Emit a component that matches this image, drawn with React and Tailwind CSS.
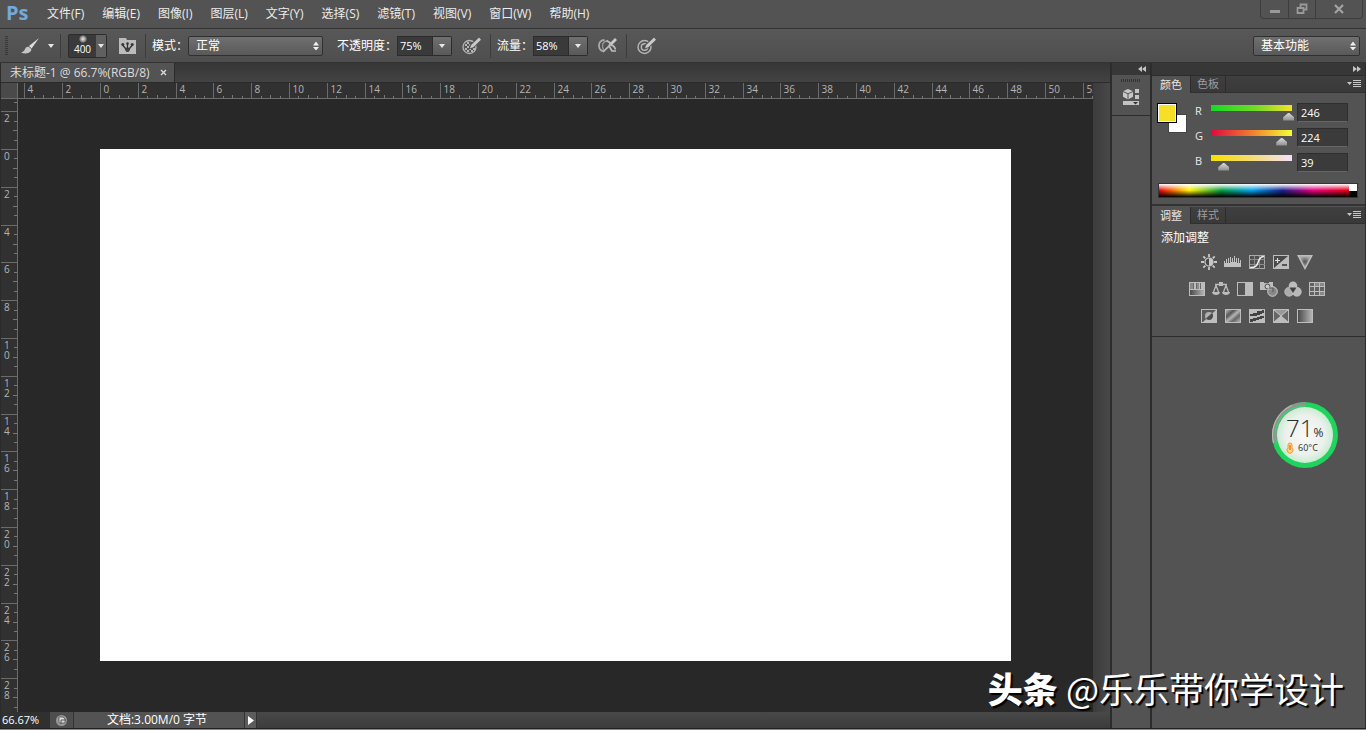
import React, { useState } from "react";

const MENUS = ["文件(F)", "编辑(E)", "图像(I)", "图层(L)", "文字(Y)", "选择(S)", "滤镜(T)", "视图(V)", "窗口(W)", "帮助(H)"];

// pixels per two centimetres at 66.7% zoom
const STEP = 37.8;

const Caret = ({ className = "" }) => (
  <svg className={className} width="6" height="4" viewBox="0 0 6 4"><path d="M0 0h6L3 4z" fill="#e8e8e8" /></svg>
);

const UpDown = () => (
  <svg className="pointer-events-none absolute top-1/2 right-1 -translate-y-1/2" width="6" height="9" viewBox="0 0 6 9">
    <path d="M0 4h6L3 0zM0 5.500h6L3 9z" fill="#f0f0f0" />
  </svg>
);

const Separator = () => <div className="h-6 w-px shrink-0 bg-[#3c3c3c]" />;

function Select({ label, value, className }) {
  return (
    <div className={`relative ${className}`}>
      <select aria-label={label} defaultValue={value} className="h-5 w-full appearance-none rounded-xs border border-[#303030] bg-linear-to-b from-[#707070] to-[#595959] pl-[7px] text-xs leading-4 text-white outline-none">
        <option>{value}</option>
      </select>
      <UpDown />
    </div>
  );
}

function PercentField({ id, label, value }) {
  return (
    <div className="flex items-center">
      <label htmlFor={id} className="whitespace-nowrap text-white">{label}</label>
      <input id={id} defaultValue={value} className="h-5 w-9 border border-[#2c2c2c] bg-[#3a3a3a] pl-0.5 text-[11px] text-white outline-none" />
      <button aria-label={`${label}选项`} className="flex h-5 w-[19px] items-center justify-center rounded-r-xs border border-l-0 border-[#2c2c2c] bg-linear-to-b from-[#707070] to-[#595959]">
        <Caret />
      </button>
    </div>
  );
}

/* ---------- option bar icons ---------- */

const BrushIcon = () => (
  <svg width="20" height="18" viewBox="0 0 20 18">
    <path d="M19 1 9 9l2.600 2.600z" fill="#dedede" />
    <path d="M8.700 9.800c-2.200-.3-3.300 1-3.900 2.800-.5 1.500-1.800 2.500-3.800 2.800 3 1.800 7.500 1.500 9.400-.8.900-1 1-2 .7-2.900z" fill="#c6c6c6" />
  </svg>
);

const BrushPanelIcon = () => (
  <svg width="17" height="16" viewBox="0 0 17 16">
    <path d="M0 0h7l1 2h9v14H0z" fill="#bcbcbc" />
    <path d="M4 7.500 6.500 10.500h4L13 7.500M8.500 6v4" stroke="#333" strokeWidth="1.300" fill="none" />
    <circle cx="3.800" cy="6.500" r="1.500" fill="#333" /><circle cx="8.500" cy="5.500" r="1.300" fill="#333" /><circle cx="13.200" cy="6.500" r="1.500" fill="#333" />
    <path d="M6 10.500h5V12l-1.500 2h-2L6 12z" fill="#444" />
  </svg>
);

const Pen = () => (
  <g>
    <path d="M16.500 0 8 7.500l-1.500 5 5-1.500L19.500 3z" fill="#505050" />
    <path d="M17 .5 9.200 8 8 11.300l3.300-1.100L19 2.700z" fill="#c9c9c9" />
  </g>
);

const PressureOpacityIcon = () => (
  <svg width="20" height="18" viewBox="0 0 20 18">
    <circle cx="7.500" cy="10" r="6.500" fill="#555" stroke="#b5b5b5" strokeWidth="1.300" />
    <path d="M3 7h2v2H3zM7 7h2v2H7zM5 9h2v2H5zM9 9h2v2H9zM3 11h2v2H3zM7 11h2v2H7zM11 11h2v2h-2zM5 13h2v2H5zM9 13h2v2H9zM5 5h2v2H5z" fill="#b5b5b5" />
    <Pen />
  </svg>
);

const AirbrushIcon = () => (
  <svg width="20" height="18" viewBox="0 0 20 18">
    <path d="M6.500 3C3 3 1 5.500 1 8.500s1.500 5 4 5.500" stroke="#aaa" strokeWidth="1.800" fill="none" />
    <path d="M10 4.500C6.500 3.500 4.500 6 4.500 9c0 1.500.5 3 1.500 4" stroke="#999" strokeWidth="1.300" fill="none" />
    <path d="M17 1 11 7l1.800 2.200L19 3z" fill="#c9c9c9" />
    <path d="M8.500 3.500 12.500 6l-1.500 3L5 15M11 9l3 5h4" stroke="#bdbdbd" strokeWidth="1.700" fill="none" />
    <path d="M13 8.500c2-.5 3.500 1 4.500 4" stroke="#bdbdbd" strokeWidth="1.600" fill="none" />
  </svg>
);

const PressureSizeIcon = () => (
  <svg width="20" height="18" viewBox="0 0 20 18">
    <circle cx="7.500" cy="10" r="6.500" fill="none" stroke="#b5b5b5" strokeWidth="1.400" />
    <circle cx="7.500" cy="10" r="3.200" fill="none" stroke="#b5b5b5" strokeWidth="1.400" />
    <Pen />
  </svg>
);

/* ---------- adjustment icons, all 18x16 ---------- */

const Frame = ({ children }) => (
  <>
    <rect x="1" y="1" width="16" height="14" fill="#bdbdbd" />
    {children}
  </>
);

const ADJUSTMENTS = [
  [
    ["亮度/对比度", <>
      <path d="M9 0v3M9 13v3M1 8h3M14 8h3M3.300 2.300l2 2M12.700 11.700l2 2M14.700 2.300l-2 2M5.300 11.700l-2 2" stroke="#c8c8c8" strokeWidth="1.800" />
      <circle cx="9" cy="8" r="4" fill="#484848" stroke="#c8c8c8" strokeWidth="1.200" />
      <path d="M9 4a4 4 0 0 1 0 8z" fill="#c8c8c8" />
    </>],
    ["色阶", <path d="M0 13V7h1v2h1V5h1v4h1V4h1v5h1V3h1v5h1V4h1v4h1V2h1v6h1V4h1v5h1V4h1v5h1V6h1v7z" fill="#c2c2c2" />],
    ["曲线", <>
      <rect x="1.500" y="1.500" width="15" height="13" fill="#505050" stroke="#aaa" />
      <path d="M6.500 2v13M11.500 2v13M2 5.500h15M2 10.500h15" stroke="#8c8c8c" />
      <path d="M2 13.500c6 0 7-2 8-5s2-6 6-6" stroke="#eee" strokeWidth="1.500" fill="none" />
    </>],
    ["曝光度", <Frame>
      <path d="M2 2h14L2 14z" fill="#494949" />
      <path d="M3 6.500h5M5.500 4v5" stroke="#ddd" strokeWidth="1.200" /><path d="M10 11h5" stroke="#3b3b3b" strokeWidth="1.600" />
    </Frame>],
    ["自然饱和度", <>
      <path d="M1 1h16L9 16z" fill="#bdbdbd" /><path d="M3.500 2.500h11L9 13z" fill="url(#vib)" />
    </>],
  ],
  [
    ["色相/饱和度", <Frame>
      <path d="M2 2h3v6H2zM9 2h2v6H9z" fill="#8b8b8b" /><path d="M5 2h1v6H5zM8 2h1v6H8zM12 2h1v6h-1z" fill="#6a6a6a" />
      <rect x="2" y="9" width="14" height="5" fill="url(#darkToLight)" />
    </Frame>],
    ["色彩平衡", <>
      <path d="M3 3.500h12M4 4.500 1.500 11M4 4.500 6.500 11M14 4.500 11.500 11M14 4.500l2.500 6.500" stroke="#bcbcbc" strokeWidth="1.300" fill="none" />
      <path d="M0 11h8c0 4-8 4-8 0M10 11h8c0 4-8 4-8 0M7 1h4v4H7z" fill="#bcbcbc" />
    </>],
    ["黑白", <Frame><rect x="2" y="2" width="7" height="12" fill="#535353" /></Frame>],
    ["照片滤镜", <>
      <path d="M0 1h4v1h5V1h4v8H0z" fill="#bdbdbd" /><circle cx="7.500" cy="5.500" r="2.500" fill="#c9c9c9" stroke="#4b4b4b" />
      <circle cx="12.500" cy="10.500" r="4.800" fill="#969696" fillOpacity=".8" stroke="#cfcfcf" /><path d="M9 7h4v4" stroke="#555" fill="none" />
    </>],
    ["通道混合器", <>
      <circle cx="9" cy="4.800" r="4.300" fill="#bdbdbd" /><circle cx="5.200" cy="10.800" r="4.500" fill="#acacac" stroke="#d0d0d0" strokeWidth=".6" /><circle cx="12.800" cy="10.800" r="4.500" fill="#b8b8b8" stroke="#d0d0d0" strokeWidth=".6" />
      <path d="M5.500 6.500h7L9 12z" fill="#424242" />
    </>],
    ["颜色查找", <Frame>
      <path d="M2 2h4v3H2zM2 6h4v4H2zM7 6h4v4H7zM12 6h4v4h-4zM2 11h4v3H2zM7 11h4v3H7z" fill="#626262" /><path d="M7 2h4v3H7zM12 2h4v3h-4zM12 11h4v3h-4z" fill="#888" />
    </Frame>],
  ],
  [
    ["反相", <Frame>
      <path d="M2 2h14L3 14H2z" fill="#5a5a5a" /><ellipse cx="9" cy="8" rx="4" ry="4" fill="#b0b0b0" /><path d="M12 5c2 2 1 7-3 7-1.500 0-2.500-.6-3-1.400z" fill="#4b4b4b" />
    </Frame>],
    ["色调分离", <Frame><rect x="2" y="2" width="14" height="12" fill="url(#bands)" /></Frame>],
    ["阈值", <Frame><path d="M2 8V6h3V5h4V3h5V2h2v3h-2v1h-2v1H9v1zM2 14v-3h3v-1h4V9h3V8h4v2h-2v1h-3v1H8v1H5v1z" fill="#424242" /></Frame>],
    ["可选颜色", <Frame><path d="M2 2v12l7-6zM16 2v12L9 8z" fill="#666" /><path d="M2 2h14L9 8z" fill="#999" /><path d="m2 2 14 12M16 2 2 14" stroke="#ccc" strokeWidth=".8" /></Frame>],
    ["渐变映射", <Frame><rect x="2" y="2" width="14" height="12" fill="url(#darkToLight)" /></Frame>],
  ],
];

function HorizontalRuler() {
  const ticks = Array.from({ length: 115 }, (_, i) => i - 8);
  return (
    <svg className="block h-4 min-w-0 flex-1 bg-[#313131]" aria-hidden="true">
      {ticks.map((i) => {
        const x = Math.round(82 + (i * STEP) / 4) + 0.5;
        const major = i % 4 === 0;
        return (
          <g key={i}>
            <path d={`M${x} ${major ? 0 : i % 2 ? 13 : 12}V16`} stroke={major ? "#6b6b6b" : "#777"} />
            {major && <text x={x + 3} y="10" fontSize="10" fill="#b4b4b4">{Math.abs(i / 2)}</text>}
          </g>
        );
      })}
      <path d="M0 15.500H2000" stroke="#6d6d6d" />
    </svg>
  );
}

function VerticalRuler() {
  const ticks = Array.from({ length: 65 }, (_, i) => i - 5);
  return (
    <svg className="block h-full w-[17px] shrink-0 bg-[#313131]" aria-hidden="true">
      {ticks.map((i) => {
        const y = Math.round(50 + (i * STEP) / 4) + 0.5;
        const major = i % 4 === 0;
        return (
          <g key={i}>
            <path d={`M${major ? 0 : i % 2 ? 13 : 12} ${y}H17`} stroke={major ? "#6b6b6b" : "#777"} />
            {major && String(Math.abs(i / 2)).split("").map((digit, n) => (
              <text key={n} x="3" y={y + 10 + n * 10} fontSize="10" fill="#b4b4b4">{digit}</text>
            ))}
          </g>
        );
      })}
      <path d="M16.500 0V2000" stroke="#6d6d6d" />
    </svg>
  );
}

function PanelTabs({ tabs }) {
  return (
    <div className="flex h-[17px] items-stretch border-b border-[#303030] bg-linear-to-b from-[#3f3f3f] to-[#393939] text-[11px]">
      <button className="-mb-px bg-[#535353] px-2 leading-4 text-[#e6e6e6]">{tabs[0]}</button>
      <button className="border-x border-[#2c2c2c] px-1.5 leading-4 text-[#9c9c9c]">{tabs[1]}</button>
      <button aria-label="面板菜单" className="mr-1 ml-auto">
        <svg width="14" height="8" viewBox="0 0 14 8">
          <path d="M0 2h5L2.500 5z" fill="#c8c8c8" />
          <path d="M6 .5h8M6 2.500h8M6 4.500h8M6 6.500h8" stroke="#c8c8c8" />
        </svg>
      </button>
    </div>
  );
}

const CHANNELS = [
  { name: "R", value: 246, track: "bg-[linear-gradient(to_right,#17d826,#70dc27_55%,#f6e027)]" },
  { name: "G", value: 224, track: "bg-[linear-gradient(to_right,#e2073c,#f08a2e_55%,#f4ff38)]" },
  { name: "B", value: 39, track: "bg-[linear-gradient(to_right,#f6e000,#f5dc66_45%,#f3e0fa)]" },
];

function Channel({ channel }) {
  const [value, setValue] = useState(channel.value);
  const onChange = (e) => setValue(Number(e.target.value) || 0);
  return (
    <div className="flex h-[25px] items-start">
      <label htmlFor={`slider-${channel.name}`} className="w-[11px] text-[11px] leading-4 text-[#e8e8e8]">{channel.name}</label>
      <input
        id={`slider-${channel.name}`}
        type="range"
        min="0"
        max="255"
        value={value}
        onChange={onChange}
        className={`mt-0.5 h-4 w-[91px] appearance-none bg-size-[81px_6px] bg-position-[5px_0] bg-no-repeat ${channel.track} [&::-webkit-slider-thumb]:mt-[7px] [&::-webkit-slider-thumb]:h-2 [&::-webkit-slider-thumb]:w-[11px] [&::-webkit-slider-thumb]:appearance-none [&::-webkit-slider-thumb]:bg-linear-to-b [&::-webkit-slider-thumb]:from-[#ddd] [&::-webkit-slider-thumb]:to-[#8a8a8a] [&::-webkit-slider-thumb]:[clip-path:polygon(50%_0,100%_60%,100%_100%,0_100%,0_60%)]`}
      />
      <input aria-label={channel.name} value={value} onChange={onChange} className="h-[19px] w-[51px] border border-[#2e2e2e] border-b-[#666] bg-[#3b3b3b] pl-[3px] text-[11px] leading-4 text-white outline-none" />
    </div>
  );
}

function ColorPanel() {
  return (
    <section className="border-b-2 border-[#333]">
      <PanelTabs tabs={["颜色", "色板"]} />
      <div className="px-1.5 pt-2.5 pb-1.5">
        <div className="flex">
          <div className="relative h-[30px] w-[37px] shrink-0">
            <div className="absolute right-2 bottom-0 size-[19px] border border-[#444] bg-white" />
            <button aria-label="前景色" className="absolute top-0 left-0 -ml-px size-5 border border-black bg-[#f6e027] outline-1 -outline-offset-2 outline-white" />
          </div>
          <div>
            {CHANNELS.map((c) => <Channel key={c.name} channel={c} />)}
          </div>
        </div>
        <div className="mt-[5px] flex h-[15px] w-[200px] border border-[#333]">
          <div className="flex-1 bg-[linear-gradient(to_bottom,#fff,transparent_50%,#000),linear-gradient(to_right,#e60012,#fff100_16%,#009944_33%,#00a0e9_49%,#1d2088_65%,#e4007f_81%,#e60012)]" />
          <div className="w-2 bg-linear-to-b from-white from-50% to-black to-50%" />
        </div>
      </div>
    </section>
  );
}

function AdjustPanel() {
  return (
    <section className="mt-px border-b border-[#2c2c2c]">
      <PanelTabs tabs={["调整", "样式"]} />
      <div className="h-28 pr-1">
        <h2 className="px-[9px] pt-1 text-xs leading-5 text-white">添加调整</h2>
        {ADJUSTMENTS.map((row, r) => (
          <div key={r} className="flex h-[27px] items-center justify-center gap-1.5">
            {row.map(([name, shape]) => (
              <button key={name} aria-label={name}>
                <svg width="18" height="16" viewBox="0 0 18 16">{shape}</svg>
              </button>
            ))}
          </div>
        ))}
      </div>
    </section>
  );
}

function UsageBall() {
  return (
    <div className="absolute top-[402px] right-7 size-[66px] text-[#2a2e2d]">
      <svg className="absolute inset-0" width="66" height="66" viewBox="0 0 66 66">
        <circle cx="33" cy="33" r="33" fill="#1fd35d" />
        <path d="M33 33 1 41A33 33 0 0 1 33 0z" fill="#929292" />
        <path d="M1.500 41A32.300 32.300 0 0 1 20 3.400" fill="none" stroke="#c3bcbc" />
        <path d="M4.500 41A29 29 0 0 1 33 4" fill="none" stroke="#3ccf70" strokeWidth="1.500" />
        <circle cx="33" cy="33" r="28" fill="url(#ball)" />
        <path d="M16 46v-3a2 2 0 0 1 4 0v3a3 3 0 1 1-4 0z" fill="#ffd08a" stroke="#f29a2e" />
        <path d="M18 43v5" stroke="#f07f12" strokeWidth="1.500" />
      </svg>
      <div className="relative flex items-baseline pt-3 pl-[14px]">
        <span className="text-2xl leading-7 font-light">71</span>
        <span className="text-xs leading-4">%</span>
      </div>
      <div className="relative pl-[26px] text-[9px] leading-3">60°C</div>
    </div>
  );
}

function TitleBar() {
  return (
    <header className="flex h-7 shrink-0 items-center bg-[#535353]">
      <span className="w-[47px] pb-0.5 pl-1.5 text-xl leading-6 font-bold text-[#74a9d8]">Ps</span>
      <nav className="flex gap-[18px]">
        {MENUS.map((m) => <button key={m} className="text-xs leading-5 whitespace-nowrap text-[#ececec]">{m}</button>)}
      </nav>
      <div className="mr-[3px] ml-auto flex h-[19px] self-start rounded-b-sm border border-t-0 border-[#3d3d3d]">
        <button aria-label="最小化" className="flex w-7 items-center justify-center border-r border-[#3d3d3d]">
          <svg width="12" height="12" viewBox="0 0 12 12"><path d="M1 7h10v3H1z" fill="#999" /></svg>
        </button>
        <button aria-label="还原" className="flex w-[27px] items-center justify-center border-r border-[#3d3d3d]">
          <svg width="12" height="12" viewBox="0 0 12 12"><path d="M4.500 4V1.500h6v5H8M1.500 5h6v5h-6z" fill="none" stroke="#999" strokeWidth="1.800" /></svg>
        </button>
        <button aria-label="关闭" className="flex w-[46px] items-center justify-center">
          <svg width="12" height="12" viewBox="0 0 12 12"><path d="m2 2 8 8M10 2l-8 8" stroke="#a3a3a3" strokeWidth="2.200" /></svg>
        </button>
      </div>
    </header>
  );
}

function OptionsBar() {
  return (
    <div className="flex h-[35px] shrink-0 items-center border-y border-[#333] bg-linear-to-b from-[#585858] to-[#4e4e4e] text-xs">
      <div className="mr-3 ml-[5px] h-5 w-[3px] bg-[repeating-linear-gradient(to_bottom,#383838_0_1px,transparent_1px_2px)]" />
      <button aria-label="画笔工具" className="mr-1.5 flex items-center gap-2"><BrushIcon /><Caret /></button>
      <Separator />
      <button aria-label="画笔预设" className="mx-[7px] flex h-6 w-[39px] rounded-xs border border-[#2c2c2c] bg-[#3a3a3a]">
        <span className="flex flex-1 flex-col items-center text-[10px] leading-3 text-white">
          <span className="size-2 shrink-0 rounded-full bg-[radial-gradient(#eee,#888_50%,transparent_75%)]" />
          400
        </span>
        <span className="flex w-[10px] items-center justify-center self-stretch bg-[#606060]"><Caret /></span>
      </button>
      <button aria-label="切换画笔面板" className="mr-[9px] ml-[5px]"><BrushPanelIcon /></button>
      <Separator />
      <span className="mr-0.5 ml-1.5 w-[34px] whitespace-nowrap text-white">模式：</span>
      <Select label="模式" value="正常" className="mr-3.5 w-[135px]" />
      <PercentField id="opacity" label="不透明度：" value="75%" />
      <button aria-label="不透明度压力" className="mr-2 ml-2.5"><PressureOpacityIcon /></button>
      <Separator />
      <div className="ml-1.5"><PercentField id="flow" label="流量：" value="58%" /></div>
      <button aria-label="喷枪" className="mr-2 ml-2.5"><AirbrushIcon /></button>
      <Separator />
      <button aria-label="大小压力" className="ml-2.5"><PressureSizeIcon /></button>
      <Select label="工作区" value="基本功能" className="mr-1.5 ml-auto w-[107px]" />
    </div>
  );
}

function StatusBar() {
  return (
    <footer className="flex h-4 shrink-0 items-stretch bg-linear-to-b from-[#484848] to-[#3c3c3c] text-xs leading-4 text-white">
      <input aria-label="缩放" defaultValue="66.67%" className="h-4 w-[49px] bg-[#303030] pl-px text-[11px] leading-4 outline-none" />
      <button aria-label="版本" className="flex w-6 items-center justify-center border-r border-[#333] bg-[#4e4e4e]">
        <svg width="13" height="13" viewBox="0 0 13 13">
          <circle cx="6.500" cy="6.500" r="5.500" fill="#999" />
          <path d="M4 3h4l2 2v4H4z" fill="#ddd" stroke="#555" strokeWidth=".8" /><path d="M6 10V6h5" stroke="#555" fill="none" />
        </svg>
      </button>
      <div className="w-[170px] bg-[#535353] pr-1 text-center">文档:3.00M/0 字节</div>
      <button aria-label="状态栏选项" className="flex w-[13px] items-center justify-center border-x border-[#333] bg-[#5c5c5c]">
        <svg width="6" height="9" viewBox="0 0 6 9"><path d="M0 0v9l6-4.500z" fill="#fff" /></svg>
      </button>
    </footer>
  );
}

function Workspace() {
  return (
    <main className="flex min-w-0 flex-1 flex-col border-l border-[#2b2b2b]">
      <div className="flex h-5 shrink-0 border-b border-[#2b2b2b] bg-linear-to-b from-[#363636] to-[#434343]">
        <div className="flex items-center gap-2.5 border-r border-[#2b2b2b] bg-[#535353] pr-[7px] pl-[9px] text-xs whitespace-nowrap text-[#dcdcdc]">
          未标题-1 @ 66.7%(RGB/8)
          <button aria-label="关闭文档">
            <svg width="7" height="7" viewBox="0 0 7 7"><path d="m1 1 5 5M6 1 1 6" stroke="#ddd" strokeWidth="1.300" /></svg>
          </button>
        </div>
      </div>
      <div className="flex min-h-0 flex-1">
        <div className="flex min-w-0 flex-1 flex-col">
          <div className="flex h-4 shrink-0">
            <div className="h-4 w-[17px] shrink-0 border-r border-b border-[#6d6d6d] bg-[#4a4a4a]" />
            <HorizontalRuler />
          </div>
          <div className="flex min-h-0 flex-1">
            <VerticalRuler />
            <div className="flex min-w-0 flex-1 items-center justify-center bg-[#282828] pb-px">
              <div className="h-[512px] w-[911px] shrink-0 bg-white" />
            </div>
          </div>
        </div>
        <div className="w-[17px] shrink-0 bg-linear-to-r from-[#3c3c3c] to-[#484848]" />
      </div>
      <StatusBar />
    </main>
  );
}

function Docks() {
  return (
    <aside className="flex w-64 shrink-0 border-l-2 border-[#2c2c2c] bg-[#535353]">
      <div className="w-10 shrink-0 border-r-2 border-[#2c2c2c]">
        <button aria-label="展开面板" className="flex h-3 w-full items-center justify-end bg-[#373737] pr-1">
          <svg width="8" height="6" viewBox="0 0 8 6"><path d="M4 0v6L0 3zM8 0v6L4 3z" fill="#c4c4c4" /></svg>
        </button>
        <div className="flex h-[41px] flex-col items-center gap-1.5 border-b border-[#2c2c2c] pt-1">
          <div className="h-[3px] w-5 bg-[repeating-linear-gradient(to_right,#333_0_1px,transparent_1px_2px)]" />
          <button aria-label="属性">
            <svg width="17" height="18" viewBox="0 0 17 18">
              <path d="m5 1 5 2.300v5.400L5 11.500 0 8.700V3.300z" fill="#c8c8c8" /><path d="m0 3.500 5 2.300 5-2.300M5 6v5.500" stroke="#555" fill="none" />
              <path d="M12 1h4v4h-4zM12 7h4v4h-4zM0 13h16v4H0z" fill="#c4c4c4" /><path d="M10 14h5l-2.500 2.500z" fill="#333" />
            </svg>
          </button>
        </div>
      </div>
      <div className="min-w-0 flex-1 border-r border-[#2c2c2c]">
        <button aria-label="折叠面板" className="flex h-[13px] w-full items-center justify-end border-b border-[#2c2c2c] bg-[#373737] pr-1">
          <svg width="8" height="6" viewBox="0 0 8 6"><path d="M0 0v6l4-3zM4 0v6l4-3z" fill="#c4c4c4" /></svg>
        </button>
        <ColorPanel />
        <AdjustPanel />
      </div>
    </aside>
  );
}

export default function App() {
  return (
    <div className="relative flex h-screen flex-col overflow-hidden bg-[#535353] font-['Open_Sans','Noto_Sans_CJK_SC',sans-serif]">
      {/* Shared gradients */}
      <svg className="absolute" width="0" height="0" aria-hidden="true">
        <defs>
          <linearGradient id="darkToLight"><stop stopColor="#4a4a4a" /><stop offset="1" stopColor="#b4b4b4" /></linearGradient>
          <linearGradient id="bands" x2="1" y2="1"><stop stopColor="#b4b4b4" /><stop offset=".3" stopColor="#555" /><stop offset=".5" stopColor="#b4b4b4" /><stop offset=".7" stopColor="#666" /><stop offset="1" stopColor="#b4b4b4" /></linearGradient>
          <radialGradient id="vib"><stop stopColor="#555" /><stop offset="1" stopColor="#a5a5a5" /></radialGradient>
          <radialGradient id="ball"><stop stopColor="#f8f8f8" /><stop offset=".7" stopColor="#ecf1ec" /><stop offset="1" stopColor="#c9ecd3" /></radialGradient>
        </defs>
      </svg>
      <TitleBar />
      <OptionsBar />
      <div className="flex min-h-0 flex-1">
        <Workspace />
        <Docks />
      </div>
      <div className="h-0.5 shrink-0 border-t border-[#222] bg-[#8a8683]" />
      <UsageBall />
      {/* Watermark */}
      <div className="absolute right-[22px] bottom-6 flex items-center gap-2 font-['Noto_Sans_CJK_SC',sans-serif] text-[35px] leading-9 whitespace-nowrap text-white [text-shadow:2px_2px_1px_#000]">
        <span className="font-black">头条</span>
        <span>@乐乐带你学设计</span>
      </div>
    </div>
  );
}
